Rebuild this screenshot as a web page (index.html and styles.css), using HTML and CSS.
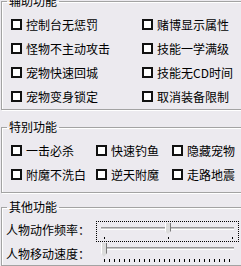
FILE: index.html
```html
<!DOCTYPE html>
<html lang="zh-CN">
<head>
    <meta charset="UTF-8">
    <title>功能设置</title>
    <link rel="stylesheet" href="styles.css">
</head>
<body>
    <div class="panel">
        <!-- 辅助功能 -->
        <fieldset class="group group-aux">
            <legend>辅助功能</legend>
            <div class="opts">
                <label class="opt"><span class="box"></span>控制台无惩罚</label>
                <label class="opt"><span class="box"></span>赌博显示属性</label>
                <label class="opt"><span class="box"></span>怪物不主动攻击</label>
                <label class="opt"><span class="box"></span>技能一学满级</label>
                <label class="opt"><span class="box"></span>宠物快速回城</label>
                <label class="opt"><span class="box"></span>技能无CD时间</label>
                <label class="opt"><span class="box"></span>宠物变身锁定</label>
                <label class="opt"><span class="box"></span>取消装备限制</label>
            </div>
        </fieldset>

        <!-- 特别功能 -->
        <fieldset class="group group-special">
            <legend>特别功能</legend>
            <div class="opts">
                <label class="opt"><span class="box"></span>一击必杀</label>
                <label class="opt"><span class="box"></span>快速钓鱼</label>
                <label class="opt"><span class="box"></span>隐藏宠物</label>
                <label class="opt"><span class="box"></span>附魔不洗白</label>
                <label class="opt"><span class="box"></span>逆天附魔</label>
                <label class="opt"><span class="box"></span>走路地震</label>
            </div>
        </fieldset>

        <!-- 其他功能 -->
        <fieldset class="group group-other">
            <legend>其他功能</legend>
            <div class="sliders">
                <div class="slider-row">
                    <span class="slider-label">人物动作频率：</span>
                    <div class="slider focused">
                        <div class="track"></div>
                        <div class="thumb" style="left: 68px"></div>
                        <div class="ticks few"></div>
                    </div>
                </div>
                <div class="slider-row">
                    <span class="slider-label">人物移动速度：</span>
                    <div class="slider tall">
                        <div class="track"></div>
                        <div class="thumb" style="left: 4px"></div>
                        <div class="ticks many"></div>
                    </div>
                </div>
            </div>
        </fieldset>
    </div>
</body>
</html>
```

FILE: styles.css
```css
/* General */
body {
    margin: 0;
    background: #eceaef;
    font-family: "Noto Sans CJK SC", "Noto Sans", sans-serif;
    font-size: 12px;
    color: #000;
    overflow: hidden;
}

.panel {
    width: 260px;
    margin-top: -6px;
}

/* Group boxes */
.group {
    margin: 0 0 0 1px;
    padding: 0;
    border: 1px solid #a3a3a3;
    box-shadow: inset 1px 1px 0 #fff, 1px 1px 0 #fff;
    min-width: 0;
}

.group legend {
    margin-left: 5px;
    padding: 0 2px;
    line-height: 14px;
}

.group-special {
    margin-top: 10px;
}

.group-other {
    margin-top: 7px;
}

/* Checkboxes */
.opts {
    display: grid;
    grid-auto-rows: 24px;
    padding: 4px 0 1px 9px;
}

.group-aux .opts {
    grid-template-columns: 131px auto;
}

.group-special .opts {
    grid-template-columns: 85px 76px auto;
    padding-bottom: 6px;
}

.opt {
    display: flex;
    align-items: center;
    gap: 4px;
    white-space: nowrap;
}

.box {
    width: 11px;
    height: 11px;
    box-sizing: border-box;
    border: 2px solid #111;
    background: #fff;
    flex: none;
}

/* Sliders */
.sliders {
    padding: 3px 0 0 4px;
}

.slider-row {
    display: flex;
    align-items: center;
    height: 24px;
}

.slider-label {
    width: 90px;
    white-space: nowrap;
}

.slider {
    position: relative;
    align-self: flex-start;
    flex: none;
    width: 143px;
    height: 21px;
    margin-top: 4px;
    box-sizing: border-box;
    border: 1px dotted transparent;
}

.slider.focused {
    border-color: #000;
}

.slider.tall {
    height: 23px;
    margin-top: 0;
}

.track {
    margin: 5px 4px 0 4px;
    height: 1px;
    border-top: 1px solid #9a9a9a;
    border-bottom: 1px solid #fff;
    background: #c8c8c8;
}

.thumb {
    position: absolute;
    top: 1px;
    width: 6px;
    height: 11px;
    background: linear-gradient(to right, #fff 1px, #dcdcdc 1px, #dcdcdc 5px, #7a7a7a 5px);
    clip-path: polygon(0 0, 100% 0, 100% 72%, 50% 100%, 0 72%);
}

.slider.tall .thumb {
    height: 14px;
}

/* tick marks sit under the track */
.ticks {
    position: absolute;
    left: 7px;
    right: 5px;
    top: 15px;
    height: 2px;
}

.ticks.few {
    background:
        linear-gradient(#000, #000) left / 1px 100% no-repeat,
        linear-gradient(#000, #000) center / 1px 100% no-repeat,
        linear-gradient(#000, #000) right / 1px 100% no-repeat;
}

.ticks.many {
    top: 17px;
    height: 3px;
    background: repeating-linear-gradient(to right, #000 0 1px, transparent 1px 5px);
}
```
